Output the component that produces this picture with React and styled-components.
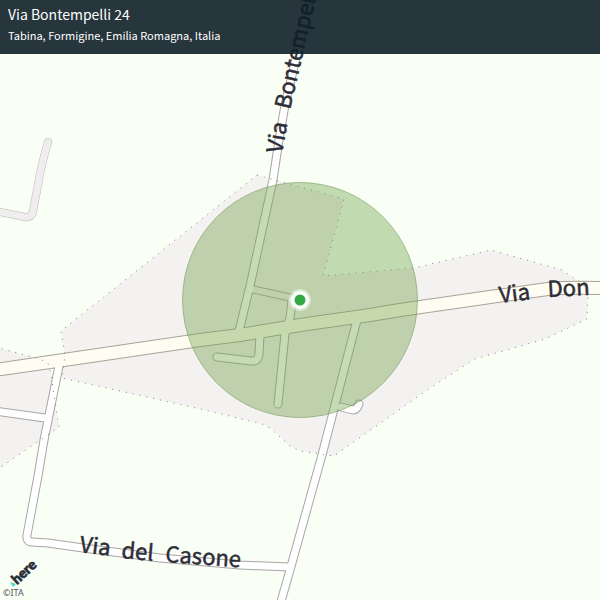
import React from "react";
import styled, { createGlobalStyle } from "styled-components";

const GlobalStyle = createGlobalStyle`
  body {
    margin: 0;
    background: #f9fff5;
    font-family: "Noto Sans CJK SC", "Noto Sans", sans-serif;
  }
`;

const Page = styled.main`
  position: relative;
`;

const Header = styled.header`
  position: absolute;
  top: 0;
  left: 0;
  right: 0;
  display: flex;
  flex-direction: column;
  gap: 4px;
  padding: 5px 8px 11px;
  background: rgba(15, 31, 41, 0.9);
  color: #fff;
`;

const Title = styled.h1`
  margin: 0;
  font-size: 14px;
  line-height: 18px;
  font-weight: 400;
`;

const Subtitle = styled.p`
  margin: 0;
  font-size: 11px;
  line-height: 16px;
`;

const MapCanvas = styled.svg`
  display: block;
  width: 100%;
  height: auto;
`;

const Area = styled.path`
  fill: #f4f1f1;
`;

const Boundary = styled.path`
  fill: none;
  stroke: #857c82;
  stroke-width: 1;
  stroke-dasharray: 1 6;
`;

const RoadLine = styled.path`
  fill: none;
  stroke: ${(p) => p.$color};
  stroke-width: ${(p) => p.$width};
  stroke-linecap: round;
  stroke-linejoin: round;
`;

const StreetLabel = styled.text`
  font-size: 22px;
  font-weight: 400;
  fill: #2d2d38;
  stroke: #2d2d38;
  stroke-width: 0.5;
`;

const Radius = styled.circle`
  fill: rgba(109, 163, 71, 0.4);
  stroke: rgba(90, 130, 60, 0.45);
  stroke-width: 1;
`;

const LogoText = styled.text`
  font-family: Lato, sans-serif;
  font-size: 14px;
  font-weight: 900;
  fill: #262d35;
  stroke: #262d35;
  stroke-width: 0.7;
`;

const Credit = styled.text`
  font-family: "Noto Sans", sans-serif;
  font-size: 9px;
  fill: #55565a;
`;

const areas = [
  "M257 175 L344 199 L323 276 L414 268 L491 250 L562 270 L580 282 L588 290 L587 319 L545 339 L475 359 L430 388 L334 456 L300 451 L290 446 L270 428 L262 424 L205 410 L62 378 L65 355 L61 331 Z",
  "M-5 347 L40 359 L48 363 L51 375 L59 427 L45 437 L-5 471 Z",
];

const roads = [
  {
    outer: 8,
    inner: 7,
    casing: "#bdb8b6",
    color: "#efeded",
    paths: ["M48 142 Q41 166 38 185 L33 211 Q32 218 25 217 L-5 211"],
  },
  {
    outer: 8,
    inner: 6,
    casing: "#aaa5a5",
    color: "#f4f1f1",
    paths: ["M251 289 L292 298"],
  },
  {
    outer: 9,
    inner: 7,
    casing: "#aaa5a5",
    color: "#ffffff",
    paths: [
      "M310 0 L297 54 L285 105 L279 140 L273 180 L250 286 L239 331",
      "M292 300 L290 318 L285 334 L278 404",
      "M217 357 L251 361 Q258 362 259 354 L260 335",
      "M357 320 L322 455 L290 570 L280 605",
      "M341 407 L353 410 Q357 410 359 404",
      "M59 366 L44 440 L38 476 L27 535 Q26 542 32 542 L48 543 L83 548 L160 558 L240 565 L289 567",
      "M-5 411 L45 418",
    ],
  },
  {
    outer: 14,
    inner: 12,
    casing: "#a8a399",
    color: "#fffdf1",
    paths: [
      "M-5 370 L50 362 L200 340 L240 335 L300 325 L370 315 L400 310 L497 296 L548 289 Q565 287 605 288",
    ],
  },
];

const labels = [
  { text: "Via", x: 282, y: 154, angle: -80 },
  { text: "Bontempelli", x: 290, y: 110, angle: -77 },
  { text: "Via", x: 500, y: 303, angle: -7 },
  { text: "Don", x: 548, y: 297, angle: -3 },
  { text: "Via", x: 79, y: 552, angle: 7 },
  { text: "del", x: 121, y: 558, angle: 5 },
  { text: "Casone", x: 165, y: 562, angle: 4 },
];

export default function App() {
  return (
    <>
      <GlobalStyle />
      <Page>
        <MapCanvas viewBox="0 0 600 600" aria-label="Map of Via Bontempelli">
          {areas.map((d) => (
            <Area key={d} d={d} />
          ))}
          {roads.map((r) =>
            r.paths.map((d) => (
              <RoadLine key={d} d={d} $color={r.casing} $width={r.outer} />
            ))
          )}
          {roads.map((r) =>
            r.paths.map((d) => (
              <RoadLine key={d} d={d} $color={r.color} $width={r.inner} />
            ))
          )}
          {areas.map((d) => (
            <Boundary key={d} d={d} />
          ))}
          <Radius cx="300" cy="300" r="117.5" />
          {labels.map((l) => (
            <StreetLabel
              key={l.text + l.x}
              transform={`translate(${l.x} ${l.y}) rotate(${l.angle})`}
            >
              {l.text}
            </StreetLabel>
          ))}
          <circle cx="300" cy="300" r="11" fill="#fff" fillOpacity="0.45" />
          <circle cx="300" cy="300" r="9" fill="#fff" />
          <circle cx="300" cy="300" r="5.5" fill="#33a943" />
          <path d="M10 582 L16 584 L13 587 Z" fill="#48dad0" />
          <LogoText transform="translate(17 585) rotate(-43)">here</LogoText>
          <Credit x="3" y="596">©ITA</Credit>
        </MapCanvas>
        <Header>
          <Title>Via Bontempelli 24</Title>
          <Subtitle>Tabina, Formigine, Emilia Romagna, Italia</Subtitle>
        </Header>
      </Page>
    </>
  );
}
